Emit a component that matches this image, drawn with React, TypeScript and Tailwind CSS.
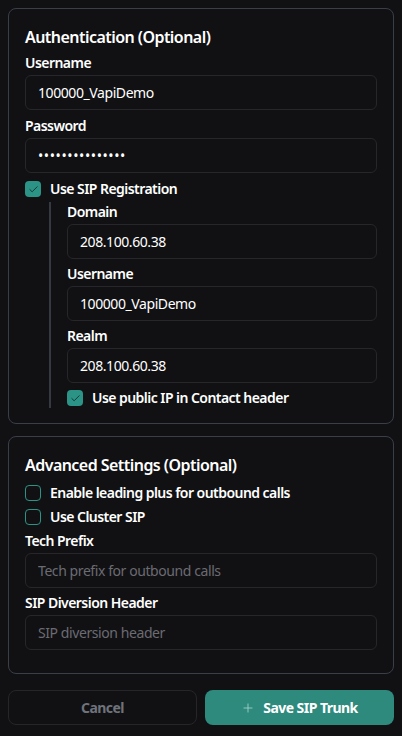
import { Check, Plus } from 'lucide-react';
import React from 'react';

const font = { fontFamily: '"Noto Sans", "Open Sans", sans-serif' };

const Field: React.FC<{ label: string; value?: string; placeholder?: string; type?: string }> = ({
  label,
  value,
  placeholder,
  type = 'text'
}) => (
  <div className="flex flex-col">
    <label className="text-[14px] leading-5 font-semibold text-white mb-[2px]">{label}</label>
    <input
      type={type}
      defaultValue={value}
      placeholder={placeholder}
      className={
        'h-[35px] w-full rounded-md border border-[#27272b] bg-[#111114] px-3 text-[14px] text-white placeholder:text-[#6b6b72] outline-none ' +
        (type === 'password' ? 'tracking-[0.6px]' : 'tracking-[-0.03em]')
      }
    />
  </div>
);

const CheckRow: React.FC<{ label: string; checked?: boolean }> = ({ label, checked }) => (
  <div className="flex items-center gap-[9px] h-5">
    {checked ? (
      <span className="flex h-4 w-4 items-center justify-center rounded-[4px] bg-[#2b9486]">
        <Check size={11} strokeWidth={2} color="#12312d" />
      </span>
    ) : (
      <span className="h-4 w-4 rounded-[4px] border-[1.5px] border-[#2b9486]" />
    )}
    <span className="text-[14px] leading-5 font-semibold text-white">{label}</span>
  </div>
);

export default function App() {
  return (
    <div className="min-h-[736px] w-[402px] bg-[#111114] px-2 pt-2 pb-3 tracking-[-0.034em]" style={font}>
      {/* Authentication */}
      <div className="rounded-lg border border-[#393e49] px-4 pt-4 pb-[15px]">
        <h3 className="text-[16px] leading-6 font-semibold text-white mb-[4px]">Authentication (Optional)</h3>
        <div className="flex flex-col gap-[6px]">
          <Field label="Username" value="100000_VapiDemo" />
          <Field label="Password" value="VapiDemoPasswd1" type="password" />
          <CheckRow label="Use SIP Registration" checked />
          <div className="ml-6 border-l-2 border-[#343944] pl-4 flex flex-col gap-[5px] -mt-[3px]">
            <Field label="Domain" value="208.100.60.38" />
            <Field label="Username" value="100000_VapiDemo" />
            <Field label="Realm" value="208.100.60.38" />
            <CheckRow label="Use public IP in Contact header" checked />
          </div>
        </div>
      </div>

      {/* Advanced */}
      <div className="mt-3 rounded-lg border border-[#393e49] px-4 pt-4 pb-[23px]">
        <h3 className="text-[16px] leading-6 font-semibold text-white mb-[6px]">Advanced Settings (Optional)</h3>
        <div className="flex flex-col gap-1">
          <CheckRow label="Enable leading plus for outbound calls" />
          <CheckRow label="Use Cluster SIP" />
        </div>
        <div className="mt-[4px] flex flex-col gap-[5px]">
          <Field label="Tech Prefix" placeholder="Tech prefix for outbound calls" />
          <Field label="SIP Diversion Header" placeholder="SIP diversion header" />
        </div>
      </div>

      {/* Actions */}
      <div className="mt-4 grid grid-cols-2 gap-2">
        <button className="h-[35px] rounded-lg border border-[#26262a] text-[14px] font-bold text-[#6f737b]">
          Cancel
        </button>
        <button className="flex h-[35px] items-center justify-center gap-2 rounded-lg bg-[#2f8a7e] text-[14px] font-bold text-white">
          <Plus size={14} strokeWidth={1.5} color="#9fd0c8" />
          Save SIP Trunk
        </button>
      </div>
    </div>
  );
}
